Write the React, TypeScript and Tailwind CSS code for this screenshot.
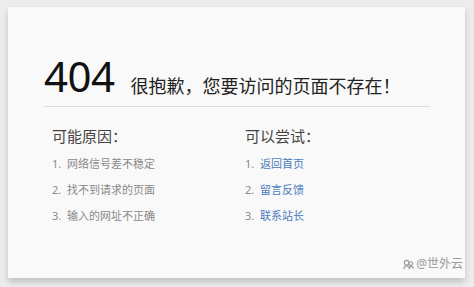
import React from "react";

const reasons = ["网络信号差不稳定", "找不到请求的页面", "输入的网址不正确"];
const tries = ["返回首页", "留言反馈", "联系站长"];

export default function App() {
  return (
    <div
      className="h-[287px] w-[474px] overflow-hidden bg-[#ececec] pl-[8px] pr-[9px] pt-[7px]"
      style={{ fontFamily: '"Noto Sans", "Noto Sans CJK SC", sans-serif' }}
    >
      <div className="relative h-[271px] bg-[#f9f9f9] shadow-[0_4px_6px_rgba(0,0,0,0.18)]">
        <div className="px-[36px] pt-[47px]">
          <div className="flex items-end border-b border-[#dcdcdc] pb-[8px] w-[386px]">
            <span className="text-[42px] leading-[44px] text-[#111] tracking-[-0.5px]">404</span>
            <span className="ml-[16px] mb-[1px] text-[18px] leading-[22px] text-[#222]">很抱歉，您要访问的页面不存在！</span>
          </div>
          <div className="mt-[19px] grid grid-cols-[193px_1fr] pl-[8px]">
            <div>
              <h3 className="text-[15px] leading-[20px] text-[#444]">可能原因：</h3>
              <ol className="mt-[10px] space-y-[10px] text-[11px] leading-[16px] text-[#8a8a8a]">
                {reasons.map((r, i) => (
                  <li key={r}>
                    {i + 1}.&nbsp; {r}
                  </li>
                ))}
              </ol>
            </div>
            <div>
              <h3 className="text-[15px] leading-[20px] text-[#444]">可以尝试：</h3>
              <ol className="mt-[10px] space-y-[10px] text-[11px] leading-[16px] text-[#8a8a8a]">
                {tries.map((t, i) => (
                  <li key={t}>
                    {i + 1}.&nbsp; <a className="text-[#4a7cc0]">{t}</a>
                  </li>
                ))}
              </ol>
            </div>
          </div>
        </div>
        <div className="absolute bottom-[5px] right-[2px] flex items-center gap-[1px] text-[12px] text-[#9a9a9a]">
          <svg width="13" height="13" viewBox="0 0 14 14" fill="none" stroke="#9a9a9a" strokeWidth="1.2">
            <circle cx="5" cy="5" r="2.5" />
            <circle cx="9.5" cy="6" r="2" />
            <path d="M2 12c0-2 1.5-3.5 3-3.5s3 1.5 3 3.5M8 11.5c0-1.5 1-2.5 2-2.5s2 1 2 2.5" />
          </svg>
          <span>@世外云</span>
        </div>
      </div>
    </div>
  );
}
